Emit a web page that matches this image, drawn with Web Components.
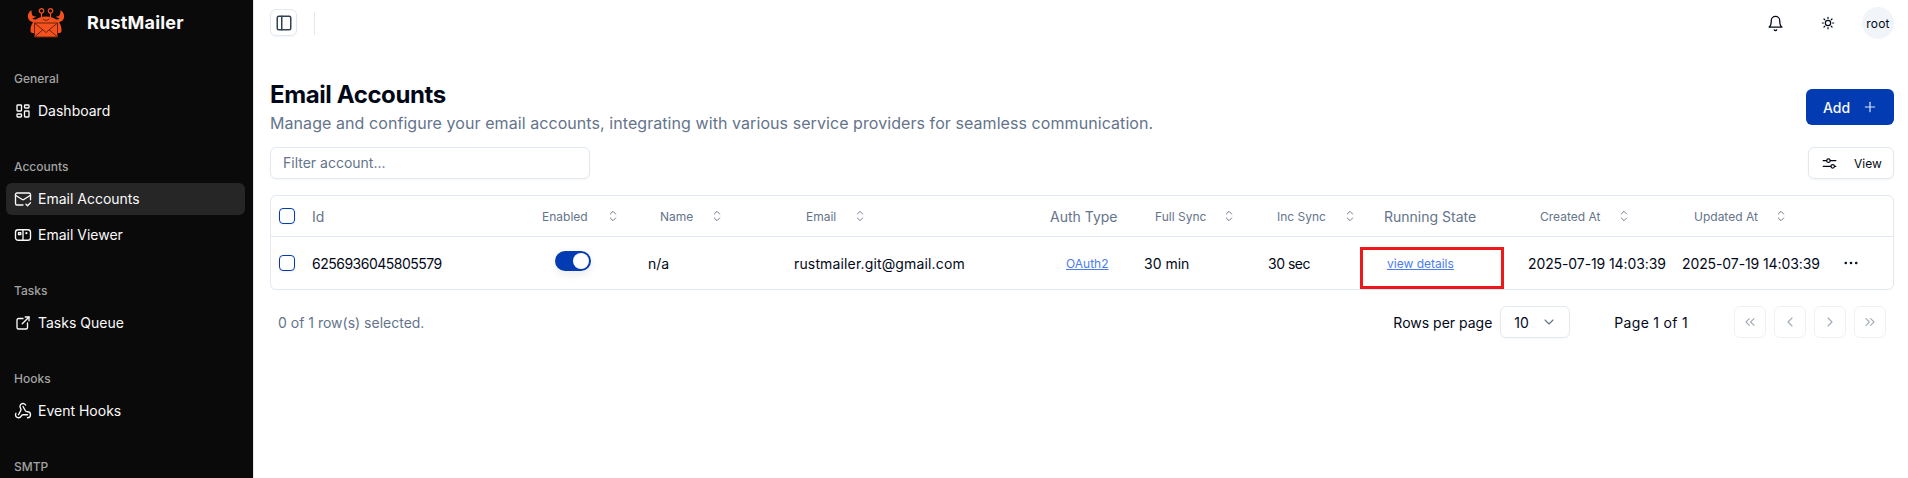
<!DOCTYPE html>
<html lang="en">
<head>
<meta charset="utf-8">
<title>RustMailer</title>
<style>
  html, body { margin: 0; height: 100%; background: #fff; overflow: hidden; }
  body { font-family: Inter, "Liberation Sans", sans-serif; color: #020817; }
</style>
</head>
<body>
<rm-app></rm-app>

<script>
const ICONS = {
  dashboard: `<path d="M5 4h4a1 1 0 0 1 1 1v6a1 1 0 0 1-1 1H5a1 1 0 0 1-1-1V5a1 1 0 0 1 1-1"/><path d="M5 16h4a1 1 0 0 1 1 1v2a1 1 0 0 1-1 1H5a1 1 0 0 1-1-1v-2a1 1 0 0 1 1-1"/><path d="M15 12h4a1 1 0 0 1 1 1v6a1 1 0 0 1-1 1h-4a1 1 0 0 1-1-1v-6a1 1 0 0 1 1-1"/><path d="M15 4h4a1 1 0 0 1 1 1v2a1 1 0 0 1-1 1h-4a1 1 0 0 1-1-1V5a1 1 0 0 1 1-1"/>`,
  mailCheck: `<path d="M22 13V6a2 2 0 0 0-2-2H4a2 2 0 0 0-2 2v12c0 1.1.9 2 2 2h8"/><path d="m22 7-8.97 5.7a1.94 1.94 0 0 1-2.06 0L2 7"/><path d="m16 19 2 2 4-4"/>`,
  viewer: `<rect x="2" y="5" width="20" height="14" rx="3.5"/><path d="M12 5v14"/><path d="M6 9h3v2.5H6z"/><circle cx="16.5" cy="9.5" r=".6"/>`,
  external: `<path d="M12 6H6a2 2 0 0 0-2 2v10a2 2 0 0 0 2 2h10a2 2 0 0 0 2-2v-6"/><path d="M11 13l9-9"/><path d="M15 4h5v5"/>`,
  webhook: `<path d="M18 16.98h-5.99c-1.1 0-1.95.94-2.48 1.9A4 4 0 0 1 2 17c.01-.7.2-1.4.57-2"/><path d="m6 17 3.13-5.78c.53-.97.1-2.18-.5-3.1a4 4 0 1 1 6.89-4.06"/><path d="m12 6 3.13 5.73C15.66 12.7 16.9 13 18 13a4 4 0 0 1 0 8"/>`,
  panel: `<rect x="3" y="3" width="18" height="18" rx="2"/><path d="M9 3v18"/>`,
  bell: `<path d="M6 8a6 6 0 0 1 12 0c0 7 3 9 3 9H3s3-2 3-9"/><path d="M10.3 21a1.94 1.94 0 0 0 3.4 0"/>`,
  sun: `<circle cx="12" cy="12" r="4"/><path d="M12 3.5v1.6M12 18.9v1.6M3.5 12h1.6M18.9 12h1.6M6 6l1.1 1.1M16.9 16.9 18 18M6 18l1.1-1.1M16.9 7.1 18 6"/>`,
  plus: `<path d="M5 12h14"/><path d="M12 5v14"/>`,
  sliders: `<path d="M3 8h5M13 8h8M3 16h11M19 16h2"/><circle cx="10.500" cy="8" r="2.500"/><circle cx="16.500" cy="16" r="2.500"/>`,
  sort: `<path d="m8 9 4-4 4 4"/><path d="m16 15-4 4-4-4"/>`,
  chevronDown: `<path d="m6 9 6 6 6-6"/>`,
  first: `<path d="m11 17-5-5 5-5"/><path d="m18 17-5-5 5-5"/>`,
  prev: `<path d="m15 18-6-6 6-6"/>`,
  next: `<path d="m9 18 6-6-6-6"/>`,
  last: `<path d="m6 17 5-5-5-5"/><path d="m13 17 5-5-5-5"/>`,
  dots: `<circle cx="12" cy="12" r="1"/><circle cx="19" cy="12" r="1"/><circle cx="5" cy="12" r="1"/>`
};

class RmIcon extends HTMLElement {
  connectedCallback() {
    const size = this.getAttribute("size") || 16;
    const weight = this.getAttribute("weight") || 2;
    this.attachShadow({ mode: "open" }).innerHTML = `
      <style>
        :host { display: inline-flex; flex: none; width: ${size}px; height: ${size}px; }
        svg { width: 100%; height: 100%; display: block; }
      </style>
      <svg viewBox="0 0 24 24" fill="none" stroke="currentColor" stroke-width="${weight}" stroke-linecap="round" stroke-linejoin="round">${ICONS[this.getAttribute("name")]}</svg>`;
  }
}

const navItemTemplate = document.createElement("template");
navItemTemplate.innerHTML = /* html */ `
  <style>
    :host {
      display: flex;
      align-items: center;
      gap: 6px;
      height: 32px;
      box-sizing: border-box;
      padding: 0 8px 1px;
      border-radius: 6px;
      font-size: 14px;
      color: #fafafa;
    }
    :host([active]) { background: #262626; }
  </style>
  <slot name="icon"></slot>
  <slot></slot>
`;

class NavItem extends HTMLElement {
  constructor() {
    super();
    this.attachShadow({ mode: "open" });
    this.shadowRoot.appendChild(navItemTemplate.content.cloneNode(true));
  }
}

const navGroupTemplate = document.createElement("template");
navGroupTemplate.innerHTML = /* html */ `
  <style>
    :host { display: flex; flex-direction: column; gap: 4px; margin-bottom: 24px; }
    .label {
      height: 32px;
      box-sizing: border-box;
      margin-bottom: -4px;
      padding: 0 8px 1px;
      display: flex;
      align-items: center;
      font-size: 12px;
      font-weight: 500;
      color: #a3a3a3;
    }
  </style>
  <div class="label"></div>
  <slot></slot>
`;

class NavGroup extends HTMLElement {
  constructor() {
    super();
    this.attachShadow({ mode: "open" });
    this.shadowRoot.appendChild(navGroupTemplate.content.cloneNode(true));
    this.shadowRoot.querySelector(".label").textContent = this.getAttribute("label");
  }
}

const sidebarTemplate = document.createElement("template");
sidebarTemplate.innerHTML = /* html */ `
  <style>
    :host {
      display: block;
      width: 253px;
      height: 100%;
      flex: none;
      overflow: hidden;
      background: #0a0a0a;
      border-right: 1px solid #e2e8f0;
    }
    .logo {
      height: 63px;
      box-sizing: border-box;
      padding: 8px 0 0 27px;
      display: flex;
      align-items: flex-start;
      gap: 22px;
      color: #fafafa;
      font-size: 18px;
      font-weight: 700;
      line-height: 28px;
      letter-spacing: 0.2px;
    }
    .logo svg { width: 38px; height: 30px; flex: none; display: block; }
    .logo span { display: block; margin-top: 1px; }
    nav { padding: 0 8px 0 6px; }
  </style>
  <div class="logo">
    <svg viewBox="0 0 38 30">
      <g fill="#f4511e">
        <path d="M4.600 2.200C.6 4.200-.4 9.600 2.600 12.400c1.600 1.500 4 2 6.200 1.600l.6-2.600c-1.600.2-3.200-.3-4-1.500 1.500.3 3-.2 4-1.600-1.200.4-2.600.2-3.600-.6C5 6.800 4.400 4.600 4.600 2.200Z"/>
      </g>
      <g fill="#f4511e" transform="translate(38 0) scale(-1 1)">
        <path d="M4.600 2.200C.6 4.200-.4 9.600 2.600 12.400c1.600 1.500 4 2 6.200 1.600l.6-2.600c-1.600.2-3.200-.3-4-1.500 1.500.3 3-.2 4-1.600-1.200.4-2.600.2-3.600-.6C5 6.800 4.400 4.600 4.600 2.200Z"/>
      </g>
      <g fill="none" stroke="#f4511e" stroke-width="1.200">
        <circle cx="14.500" cy="2.800" r="2.200"/>
        <circle cx="23.500" cy="2.800" r="2.200"/>
        <path d="M14.500 5v4M23.500 5v4"/>
      </g>
      <path d="M3.500 23C3 14 10 8.500 19 8.500S35 14 34.500 23c-.1 1.500-1 2-2.500 2H6c-1.500 0-2.400-.5-2.500-2Z" fill="#f4511e"/>
      <path d="M7.500 15h23v14h-23z" fill="#f4511e" stroke="#6b2408" stroke-width="1"/>
      <path d="M7.500 15 19 24.500 30.500 15M7.500 29l8.600-7.500M30.500 29l-8.600-7.500" fill="none" stroke="#6b2408" stroke-width="1"/>
      <path d="M16 11.200c1.500 1.500 4.500 1.500 6 0" fill="none" stroke="#6b2408" stroke-width="1" stroke-linecap="round"/>
    </svg>
    <span>RustMailer</span>
  </div>
  <nav><slot></slot></nav>
`;

class AppSidebar extends HTMLElement {
  constructor() {
    super();
    this.attachShadow({ mode: "open" });
    this.shadowRoot.appendChild(sidebarTemplate.content.cloneNode(true));
  }
}

const topbarTemplate = document.createElement("template");
topbarTemplate.innerHTML = /* html */ `
  <style>
    :host {
      display: flex;
      align-items: center;
      height: 46px;
      flex: none;
      color: #020817;
    }
    .toggle {
      width: 27px;
      height: 27px;
      box-sizing: border-box;
      margin-top: -1px;
      border: 1px solid #e2e8f0;
      border-radius: 6px;
      box-shadow: 0 1px 2px rgba(0, 0, 0, 0.05);
      display: flex;
      align-items: center;
      justify-content: center;
      color: #334155;
    }
    .sep { width: 1px; height: 23px; margin-left: 17px; background: #e2e8f0; }
    .end { margin-left: auto; display: flex; align-items: center; }
    .bell { margin-right: 36px; display: flex; }
    .sun { margin-right: 26px; display: flex; }
    .avatar {
      width: 32px;
      height: 32px;
      border-radius: 50%;
      background: #f1f5f9;
      display: flex;
      align-items: center;
      justify-content: center;
      font-size: 12px;
      letter-spacing: 0.2px;
    }
  </style>
  <div class="toggle"><rm-icon name="panel" size="18"></rm-icon></div>
  <div class="sep"></div>
  <div class="end">
    <span class="bell"><rm-icon name="bell" size="17" weight="1.800"></rm-icon></span>
    <span class="sun"><rm-icon name="sun" size="16" weight="1.800"></rm-icon></span>
    <div class="avatar">root</div>
  </div>
`;

class AppTopbar extends HTMLElement {
  constructor() {
    super();
    this.attachShadow({ mode: "open" });
    this.shadowRoot.appendChild(topbarTemplate.content.cloneNode(true));
  }
}

const headingTemplate = document.createElement("template");
headingTemplate.innerHTML = /* html */ `
  <style>
    :host {
      display: flex;
      align-items: center;
      justify-content: space-between;
      margin-top: 33px;
    }
    h2 { margin: 0; font-size: 24px; line-height: 32px; font-weight: 700; letter-spacing: -0.4px; color: #020817; }
    p { margin: 0; font-size: 16px; line-height: 24px; letter-spacing: 0.07px; color: #64748b; }
    .add {
      display: flex;
      align-items: center;
      gap: 12px;
      width: 88px;
      height: 36px;
      box-sizing: border-box;
      padding-left: 17px;
      border-radius: 6px;
      background: #033cb2;
      color: #f8fafc;
      font-size: 14px;
      font-weight: 500;
    }
    .add rm-icon { color: #dbe4f7; }
  </style>
  <div>
    <h2>Email Accounts</h2>
    <p>Manage and configure your email accounts, integrating with various service providers for seamless communication.</p>
  </div>
  <div class="add">Add <rm-icon name="plus" size="16" weight="1.800"></rm-icon></div>
`;

class PageHeading extends HTMLElement {
  constructor() {
    super();
    this.attachShadow({ mode: "open" });
    this.shadowRoot.appendChild(headingTemplate.content.cloneNode(true));
  }
}

const toolbarTemplate = document.createElement("template");
toolbarTemplate.innerHTML = /* html */ `
  <style>
    :host {
      display: flex;
      align-items: center;
      justify-content: space-between;
      margin-top: 12px;
    }
    .filter {
      width: 320px;
      height: 32px;
      box-sizing: border-box;
      padding: 0 12px 1px;
      display: flex;
      align-items: center;
      border: 1px solid #e2e8f0;
      border-radius: 6px;
      box-shadow: 0 1px 2px rgba(0, 0, 0, 0.03);
      font-size: 14px;
      color: #64748b;
    }
    .view {
      display: flex;
      align-items: center;
      gap: 16px;
      width: 86px;
      height: 32px;
      box-sizing: border-box;
      padding-left: 12px;
      border: 1px solid #e2e8f0;
      border-radius: 6px;
      box-shadow: 0 1px 2px rgba(0, 0, 0, 0.05);
      font-size: 12px;
      color: #020817;
    }
  </style>
  <div class="filter">Filter account...</div>
  <div class="view"><rm-icon name="sliders" size="17" weight="1.600"></rm-icon>View</div>
`;

class TableToolbar extends HTMLElement {
  constructor() {
    super();
    this.attachShadow({ mode: "open" });
    this.shadowRoot.appendChild(toolbarTemplate.content.cloneNode(true));
  }
}

// header cell with the up/down sort mark; gap differs per column in the reference
class SortHead extends HTMLElement {
  connectedCallback() {
    const gap = this.getAttribute("gap") || 16;
    this.attachShadow({ mode: "open" }).innerHTML = `
      <style>
        :host { display: inline-flex; align-items: center; gap: ${gap}px; font-size: 12px; color: #64748b; }
      </style>
      <slot></slot><rm-icon name="sort" size="16" weight="1.400"></rm-icon>`;
  }
}

const tableTemplate = document.createElement("template");
tableTemplate.innerHTML = /* html */ `
  <style>
    :host {
      display: block;
      margin-top: 16px;
      border: 1px solid #e2e8f0;
      border-radius: 6px;
      font-size: 14px;
    }
    .row {
      display: grid;
      grid-template-columns: 33px 226px 110px 146px 256px 94px 124px 116px 144px 154px 161px 58px;
      align-items: stretch;
    }
    .head { height: 40px; border-bottom: 1px solid #e2e8f0; color: #64748b; }
    .body { height: 52px; color: #020817; }
    .row > div { display: flex; align-items: center; min-width: 0; padding-left: var(--pl, 8px); position: relative; white-space: nowrap; }
    .box {
      width: 16px;
      height: 16px;
      box-sizing: border-box;
      border: 1px solid #033cb2;
      border-radius: 4px;
      box-shadow: 0 1px 2px rgba(0, 0, 0, 0.05);
    }
    .switch {
      width: 36px;
      height: 20px;
      box-sizing: border-box;
      padding: 2px;
      margin-bottom: 4px;
      border-radius: 10px;
      background: #033cb2;
      display: flex;
      justify-content: flex-end;
      box-shadow: 0 4px 8px rgba(0, 0, 0, 0.08);
    }
    .switch i { width: 16px; height: 16px; border-radius: 50%; background: #fff; }
    a { color: #4b7cf3; font-size: 12px; text-decoration: underline; }
    .digits { letter-spacing: -0.5px; }
    .stamp { letter-spacing: -0.1px; }
    .mail { letter-spacing: 0.15px; }
    .secs { letter-spacing: -0.5px; }
    .mark {
      position: absolute;
      left: -16px;
      top: 10px;
      width: 144px;
      height: 42px;
      box-sizing: border-box;
      border: 3px solid #f0171a;
    }
  </style>
  <div class="row head">
    <div><span class="box"></span></div>
    <div>Id</div>
    <div style="--pl:12px"><sort-head gap="17">Enabled</sort-head></div>
    <div style="--pl:20px"><sort-head gap="16">Name</sort-head></div>
    <div style="--pl:20px"><sort-head gap="16">Email</sort-head></div>
    <div>Auth Type</div>
    <div style="--pl:19px"><sort-head gap="15">Full Sync</sort-head></div>
    <div style="--pl:17px"><sort-head gap="16">Inc Sync</sort-head></div>
    <div>Running State</div>
    <div style="--pl:20px"><sort-head gap="16">Created At</sort-head></div>
    <div style="--pl:20px"><sort-head gap="15">Updated At</sort-head></div>
    <div></div>
  </div>
  <div class="row body">
    <div><span class="box"></span></div>
    <div class="digits">6256936045805579</div>
    <div style="--pl:25px"><span class="switch"><i></i></span></div>
    <div>n/a</div>
    <div class="mail">rustmailer.git@gmail.com</div>
    <div style="--pl:24px"><a>OAuth2</a></div>
    <div>30 min</div>
    <div class="secs">30 sec</div>
    <div style="--pl:11px"><a>view details</a><span class="mark"></span></div>
    <div class="stamp">2025-07-19 14:03:39</div>
    <div class="stamp">2025-07-19 14:03:39</div>
    <div style="--pl:7px"><rm-icon name="dots" size="18" weight="1.500"></rm-icon></div>
  </div>
`;

class AccountsTable extends HTMLElement {
  constructor() {
    super();
    this.attachShadow({ mode: "open" });
    this.shadowRoot.appendChild(tableTemplate.content.cloneNode(true));
  }
}

const pagerTemplate = document.createElement("template");
pagerTemplate.innerHTML = /* html */ `
  <style>
    :host {
      display: flex;
      align-items: center;
      margin-top: 16px;
      padding: 0 8px;
      font-size: 14px;
      color: #020817;
    }
    .count { color: #64748b; margin-right: auto; }
    .rows { margin-right: 8px; }
    .select {
      width: 70px;
      height: 32px;
      box-sizing: border-box;
      padding: 0 12px 0 13px;
      display: flex;
      align-items: center;
      justify-content: space-between;
      border: 1px solid #e2e8f0;
      border-radius: 6px;
      box-shadow: 0 1px 2px rgba(0, 0, 0, 0.03);
    }
    .select rm-icon { color: #64748b; }
    .page { margin: 0 46px 0 44px; letter-spacing: 0.3px; }
    .btns { display: flex; gap: 8px; }
    .btn {
      width: 32px;
      height: 32px;
      box-sizing: border-box;
      display: flex;
      align-items: center;
      justify-content: center;
      border: 1px solid #eef2f6;
      border-radius: 6px;
      color: #a0aab8;
    }
  </style>
  <div class="count">0 of 1 row(s) selected.</div>
  <div class="rows">Rows per page</div>
  <div class="select">10 <rm-icon name="chevronDown" size="16" weight="1.600"></rm-icon></div>
  <div class="page">Page 1 of 1</div>
  <div class="btns">
    <div class="btn"><rm-icon name="first" size="16" weight="1.600"></rm-icon></div>
    <div class="btn"><rm-icon name="prev" size="16" weight="1.600"></rm-icon></div>
    <div class="btn"><rm-icon name="next" size="16" weight="1.600"></rm-icon></div>
    <div class="btn"><rm-icon name="last" size="16" weight="1.600"></rm-icon></div>
  </div>
`;

class TablePager extends HTMLElement {
  constructor() {
    super();
    this.attachShadow({ mode: "open" });
    this.shadowRoot.appendChild(pagerTemplate.content.cloneNode(true));
  }
}

const appTemplate = document.createElement("template");
appTemplate.innerHTML = /* html */ `
  <style>
    :host { display: flex; height: 100vh; overflow: hidden; }
    main { flex: 1; min-width: 0; padding: 0 14px 0 16px; display: flex; flex-direction: column; }
  </style>
  <app-sidebar>
    <nav-group label="General">
      <nav-item><rm-icon slot="icon" name="dashboard" size="18" weight="1.800"></rm-icon>Dashboard</nav-item>
    </nav-group>
    <nav-group label="Accounts">
      <nav-item active><rm-icon slot="icon" name="mailCheck" size="18" weight="1.800"></rm-icon>Email Accounts</nav-item>
      <nav-item><rm-icon slot="icon" name="viewer" size="18" weight="1.800"></rm-icon>Email Viewer</nav-item>
    </nav-group>
    <nav-group label="Tasks">
      <nav-item><rm-icon slot="icon" name="external" size="18" weight="1.800"></rm-icon>Tasks Queue</nav-item>
    </nav-group>
    <nav-group label="Hooks">
      <nav-item><rm-icon slot="icon" name="webhook" size="18" weight="1.800"></rm-icon>Event Hooks</nav-item>
    </nav-group>
    <nav-group label="SMTP"></nav-group>
  </app-sidebar>
  <main>
    <app-topbar></app-topbar>
    <page-heading></page-heading>
    <table-toolbar></table-toolbar>
    <accounts-table></accounts-table>
    <table-pager></table-pager>
  </main>
`;

class RmApp extends HTMLElement {
  constructor() {
    super();
    this.attachShadow({ mode: "open" });
    this.shadowRoot.appendChild(appTemplate.content.cloneNode(true));
  }
}

customElements.define("rm-icon", RmIcon);
customElements.define("nav-item", NavItem);
customElements.define("nav-group", NavGroup);
customElements.define("app-sidebar", AppSidebar);
customElements.define("app-topbar", AppTopbar);
customElements.define("page-heading", PageHeading);
customElements.define("table-toolbar", TableToolbar);
customElements.define("sort-head", SortHead);
customElements.define("accounts-table", AccountsTable);
customElements.define("table-pager", TablePager);
customElements.define("rm-app", RmApp);
</script>
</body>
</html>
